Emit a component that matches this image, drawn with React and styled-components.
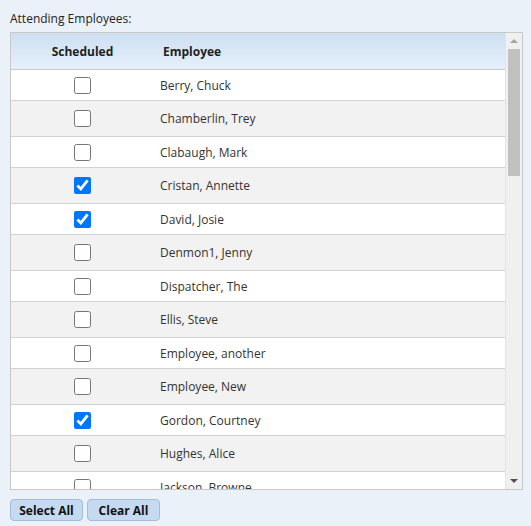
import React from "react"
import styled, { createGlobalStyle } from "styled-components"

const GlobalStyle = createGlobalStyle`
  html, body {
    margin: 0;
    padding: 0;
    background: #eaf1f9;
  }
  body {
    font-family: "Open Sans", "Noto Sans", sans-serif;
    font-size: 12px;
    color: #333;
  }
`

const Page = styled.div`
  padding: 9px 8px 0 10px;
  width: 531px;
  box-sizing: border-box;
`

const Title = styled.div`
  font-size: 12px;
  line-height: 20px;
  color: #222;
  margin-bottom: 3px;
`

const Frame = styled.div`
  display: flex;
  width: 513px;
  height: 458px;
  box-sizing: border-box;
  border: 1px solid #c8c8c8;
  background: #fff;
`

const Viewport = styled.div`
  flex: 1;
  overflow: hidden;
`

const HeaderRow = styled.div`
  display: flex;
  align-items: center;
  height: 36px;
  border-bottom: 1px solid #c8c8c8;
  background: linear-gradient(#cddff2, #e6f0fb);
  font-weight: 700;
  color: #222;
`

const SchedHead = styled.div`
  width: 143px;
  text-align: center;
`

const NameHead = styled.div`
  padding-left: 9px;
`

const Row = styled.div`
  display: flex;
  align-items: center;
  height: ${({ $alt }) => ($alt ? "35px" : "30px")};
  border-bottom: 1px solid #d2d2d2;
  background: ${({ $alt }) => ($alt ? "#f2f2f2" : "#fff")};
`

const CheckCell = styled.div`
  width: 143px;
  display: flex;
  justify-content: center;
`

const Check = styled.input`
  width: 17px;
  height: 17px;
  margin: 0;
  accent-color: #0075ff;
`

const NameCell = styled.div`
  padding-left: 6px;
  color: #333;
`

const Scrollbar = styled.div`
  width: 16px;
  display: flex;
  flex-direction: column;
  align-items: center;
  background: #f0f0f0;
  border-left: 1px solid #e4e4e4;
`

const Arrow = styled.div`
  height: 16px;
  width: 16px;
  display: flex;
  align-items: center;
  justify-content: center;
`

const Thumb = styled.div`
  width: 12px;
  height: 127px;
  background: #c1c1c1;
`

const Spacer = styled.div`
  flex: 1;
`

const Buttons = styled.div`
  display: flex;
  gap: 4px;
  margin-top: 9px;
`

const Button = styled.button`
  width: 73px;
  height: 22px;
  padding: 0;
  border: 1px solid #a3bddc;
  border-radius: 4px;
  background: #c5d9f0;
  font-family: "Open Sans", "Noto Sans", sans-serif;
  font-size: 12px;
  font-weight: 700;
  color: #111;
`

const employees = [
  ["Berry, Chuck", false],
  ["Chamberlin, Trey", false],
  ["Clabaugh, Mark", false],
  ["Cristan, Annette", true],
  ["David, Josie", true],
  ["Denmon1, Jenny", false],
  ["Dispatcher, The", false],
  ["Ellis, Steve", false],
  ["Employee, another", false],
  ["Employee, New", false],
  ["Gordon, Courtney", true],
  ["Hughes, Alice", false],
  ["Jackson, Browne", false],
]

export default function App() {
  const [checked, setChecked] = React.useState(employees.map((e) => e[1]))
  const toggle = (i) => setChecked((prev) => prev.map((v, j) => (j === i ? !v : v)))

  return (
    <>
      <GlobalStyle />
      <Page>
        <Title>Attending Employees:</Title>
        <Frame>
          <Viewport>
            <HeaderRow>
              <SchedHead>Scheduled</SchedHead>
              <NameHead>Employee</NameHead>
            </HeaderRow>
            {employees.map(([name], i) => (
              <Row key={name} $alt={i % 2 === 1}>
                <CheckCell>
                  <Check type="checkbox" checked={checked[i]} onChange={() => toggle(i)} />
                </CheckCell>
                <NameCell>{name}</NameCell>
              </Row>
            ))}
          </Viewport>
          <Scrollbar>
            <Arrow>
              <svg width="8" height="4" viewBox="0 0 8 4">
                <path d="M0 4 L4 0 L8 4 Z" fill="#a3a3a3" />
              </svg>
            </Arrow>
            <Thumb />
            <Spacer />
            <Arrow>
              <svg width="8" height="4" viewBox="0 0 8 4">
                <path d="M0 0 L8 0 L4 4 Z" fill="#505050" />
              </svg>
            </Arrow>
          </Scrollbar>
        </Frame>
        <Buttons>
          <Button onClick={() => setChecked(employees.map(() => true))}>Select All</Button>
          <Button onClick={() => setChecked(employees.map(() => false))}>Clear All</Button>
        </Buttons>
      </Page>
    </>
  )
}
